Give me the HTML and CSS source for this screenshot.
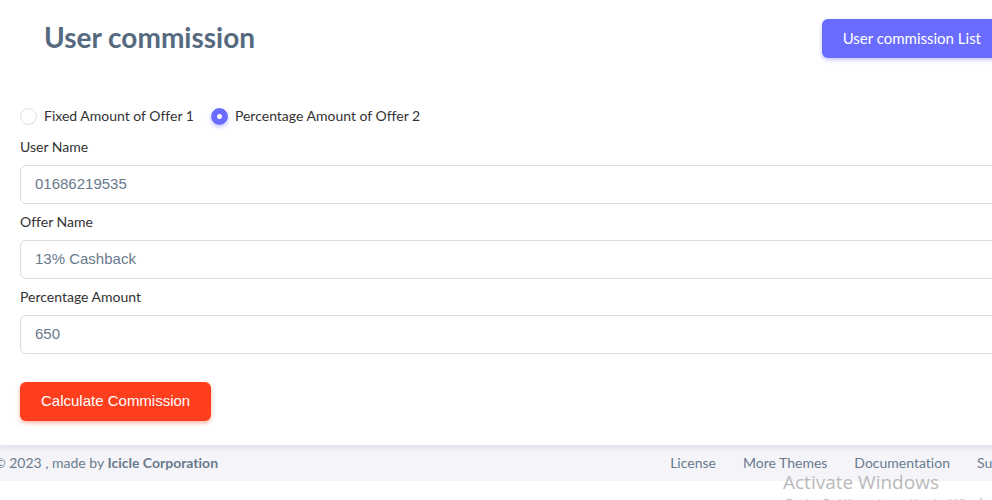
FILE: index.html
```html
<!DOCTYPE html>
<html lang="en">
<head>
<meta charset="utf-8">
<title>User commission</title>
<link rel="stylesheet" href="styles.css">
</head>
<body>
<div class="page">
  <main class="card">
    <header class="card-header">
      <h1 class="title">User commission</h1>
      <a class="btn btn-primary" href="#">User commission List</a>
    </header>
    <form class="form">
      <div class="radios">
        <label class="radio"><input type="radio" name="kind" value="1">Fixed Amount of Offer 1</label>
        <label class="radio"><input type="radio" name="kind" value="2" checked>Percentage Amount of Offer 2</label>
      </div>
      <div class="field">
        <label for="user">User Name</label>
        <input class="control" id="user" type="text" value="01686219535">
      </div>
      <div class="field">
        <label for="offer">Offer Name</label>
        <input class="control" id="offer" type="text" value="13% Cashback">
      </div>
      <div class="field">
        <label for="amount">Percentage Amount</label>
        <input class="control" id="amount" type="text" value="650">
      </div>
      <button class="btn btn-danger" type="button">Calculate Commission</button>
    </form>
  </main>
  <footer class="footer">
    <div>© 2023 , made by <a class="brand" href="#">Icicle Corporation</a></div>
    <nav class="links">
      <a href="#">License</a>
      <a href="#">More Themes</a>
      <a href="#">Documentation</a>
      <a href="#">Support</a>
    </nav>
  </footer>
  <div class="watermark">
    <div class="watermark-title">Activate Windows</div>
    <div class="watermark-text">Go to Settings to activate Windows.</div>
  </div>
</div>
</body>
</html>
```
FILE: styles.css
```css
* { box-sizing: border-box; }
body {
  margin: 0;
  background: #fff;
  font-family: Lato, sans-serif;
  font-size: 14px;
  line-height: 20px;
  font-variant-ligatures: none;
  color: #697a8d;
}
a { color: inherit; text-decoration: none; }
.page {
  position: relative;
  height: 100vh;
  overflow: hidden;
}
/* The card and footer run past both window edges. */
.card {
  position: relative;
  margin: 0 -24px 0 -4px;
  padding: 19px 0 24px 24px;
  background: #fff;
  border-radius: 0 0 8px 8px;
  box-shadow: 0 2px 6px rgba(67, 89, 113, 0.16);
}
.card-header {
  display: flex;
  justify-content: space-between;
  align-items: flex-start;
  padding: 0 14px 0 24px;
}
.title {
  margin: 0;
  font-size: 28px;
  line-height: 36px;
  font-weight: 700;
  color: #566a7f;
}
.btn {
  display: inline-block;
  height: 39px;
  padding: 0 21px;
  border: 0;
  border-radius: 6px;
  font-size: 15px;
  line-height: 39px;
  color: #fff;
}
.btn-primary {
  background: #696cff;
  box-shadow: 0 2px 4px rgba(105, 108, 255, 0.4);
}
.btn-danger {
  margin-top: 28px;
  padding-bottom: 2px;
  background: #ff3e1d;
  font-family: "Liberation Sans", Arial, sans-serif;
  line-height: 37px;
  box-shadow: 0 2px 4px rgba(255, 62, 29, 0.4);
}
.form {
  padding-top: 48px;
  color: #333;
}
.radios {
  display: flex;
  gap: 17px;
  margin-bottom: 11px;
}
.radio {
  display: flex;
  align-items: center;
  gap: 7px;
}
.radio input {
  appearance: none;
  width: 17px;
  height: 17px;
  margin: 0;
  border: 1px solid #d9dee3;
  border-radius: 50%;
  background: #fff;
}
.radio input:checked {
  border-color: #696cff;
  background: radial-gradient(circle, #fff 0 2px, #696cff 3px);
  box-shadow: 0 2px 4px rgba(105, 108, 255, 0.4);
}
.field label {
  display: block;
  margin-bottom: 8px;
}
.field + .field { margin-top: 8px; }
.control {
  display: block;
  width: 100%;
  height: 39px;
  padding: 0 14px 2px;
  border: 1px solid #d9dee3;
  border-radius: 6px;
  background: #fff;
  font-family: "Liberation Sans", Arial, sans-serif;
  font-size: 15px;
  color: #697a8d;
}
.footer {
  display: flex;
  justify-content: space-between;
  margin: 0 -34px 0 -6px;
  padding: 8px 0;
  background: #f5f5f9;
}
.brand { font-weight: 700; }
.links {
  display: flex;
  gap: 27px;
}
.watermark {
  position: absolute;
  left: 783px;
  top: 470px;
  white-space: nowrap;
  font-family: "Open Sans", sans-serif;
  color: #b9b9bb;
}
.watermark-title {
  font-size: 19px;
  line-height: 24px;
}
.watermark-text {
  font-size: 14px;
  line-height: 20px;
}
```
